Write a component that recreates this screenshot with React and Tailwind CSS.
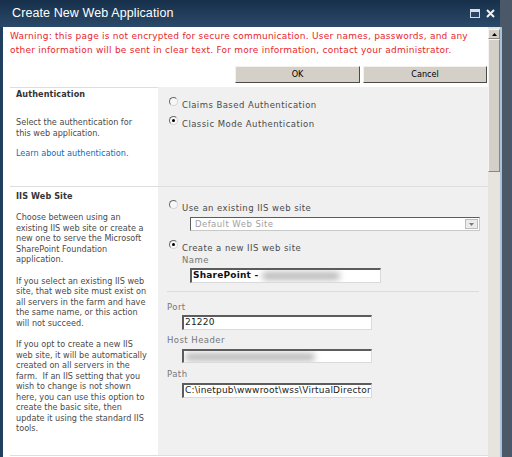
import React from 'react';

const ui = "font-['DejaVu_Sans','Verdana',sans-serif]";
const tah = "font-['DejaVu_Sans_Condensed','Liberation_Sans',sans-serif]";

function Radio({ checked }) {
  return (
    <span className="relative mt-[-2px] inline-block h-[9px] w-[9px] shrink-0 rounded-full border border-t-[#6a6a6a] border-l-[#6a6a6a] border-r-[#d6d6d6] border-b-[#d6d6d6] bg-[#f7f7f7]">
      {checked && <span className="absolute left-[2px] top-[2px] h-[3px] w-[3px] rounded-full bg-black" />}
    </span>
  );
}

function RadioRow({ checked, label, className = '' }) {
  return (
    <div className={`flex items-start pl-[11px] ${className}`}>
      <Radio checked={checked} />
      <span className={`ml-[4px] text-[8.5px] leading-[12px] tracking-[0.45px] text-[#4a4a4a] ${ui}`}>{label}</span>
    </div>
  );
}

function Field({ className = '', children }) {
  return (
    <div
      className={`flex items-center overflow-hidden whitespace-nowrap border-t-2 border-l-2 border-r border-b border-t-[#5c5c5c] border-l-[#5c5c5c] border-r-[#dadada] border-b-[#dadada] bg-white pl-[1px] text-[9px] tracking-[0.2px] text-[#1a1a1a] ${ui} ${className}`}
    >
      {children}
    </div>
  );
}

function Smudge({ w }) {
  return <span className={`inline-block h-[8px] ${w} rounded-full bg-[#b8b8b8] blur-[3px]`} />;
}

function Label({ children, className = '' }) {
  return <div className={`pl-[9px] text-[8.5px] leading-[11px] tracking-[0.45px] text-[#777] ${ui} ${className}`}>{children}</div>;
}

export default function App() {
  return (
    <div className="flex h-[457px] w-[512px] overflow-hidden bg-[#4b5868]">
      <div className="flex w-[502px] flex-col">
        {/* title bar */}
        <div className="flex h-[27px] w-[500px] shrink-0 items-center bg-gradient-to-b from-[#17304b] to-[#2a4a69] pl-[12px] pr-[5px]">
          <span className="text-[12.5px] tracking-[0.1px] text-white font-['Liberation_Sans','Arial',sans-serif]">
            Create New Web Application
          </span>
          <div className="ml-auto flex items-center gap-[6px]">
            <span className="h-[9px] w-[10px] border border-t-[3px] border-[#d8dde3] bg-[#2a4664]" />
            <svg width="9" height="9" viewBox="0 0 9 9">
              <path d="M1 1 L8 8 M8 1 L1 8" stroke="#eef1f4" strokeWidth="2" />
            </svg>
          </div>
        </div>

        {/* body */}
        <div className="flex min-h-0 flex-1 border-r-2 border-[#a9c3da]">
          <div className="w-[3px] shrink-0 bg-[#21405f]" />

          <div className="flex w-[485px] shrink-0 flex-col overflow-hidden bg-white">
            <p className={`pl-[7px] pt-[2px] text-[9px] leading-[14px] tracking-[0.24px] text-[#e8262c] ${ui} whitespace-nowrap`}>
              Warning: this page is not encrypted for secure communication. User names, passwords, and any
              <br />
              other information will be sent in clear text. For more information, contact your administrator.
            </p>

            <div className="mt-[9px] flex justify-end gap-[3px] pr-[1px]">
              <button className={`h-[17px] w-[125px] border border-t-[#f4f2ee] border-l-[#f4f2ee] border-r-[#4a4a4a] border-b-[#4a4a4a] bg-[#d4d0c8] text-[9px] text-black ${tah}`}>
                OK
              </button>
              <button className={`h-[17px] w-[124px] border border-t-[#f4f2ee] border-l-[#f4f2ee] border-r-[#4a4a4a] border-b-[#4a4a4a] bg-[#d4d0c8] text-[9px] text-black ${tah}`}>
                Cancel
              </button>
            </div>

            {/* Authentication */}
            <div className="ml-[7px] mt-[4px] flex h-[99px] shrink-0">
              <div className={`w-[148px] shrink-0 whitespace-nowrap border-t border-[#dedede] px-[6px] text-[9px] text-[#4a4a4a] ${tah}`}>
                <div className="text-[9px] font-bold leading-[12px] tracking-[0.1px] text-[#333]">Authentication</div>
                <div className="mt-[17px] leading-[10.5px]">
                  Select the authentication for
                  <br />
                  this web application.
                </div>
                <div className="mt-[10px] leading-[10.5px] text-[#0a6fbf]">Learn about authentication.</div>
              </div>
              <div className="flex-1 bg-[#f0f0f0] pt-[12px]">
                <RadioRow label="Claims Based Authentication" />
                <RadioRow checked label="Classic Mode Authentication" className="mt-[7px]" />
              </div>
            </div>

            {/* IIS Web Site */}
            <div className="ml-[7px] flex h-[270px] shrink-0 border-y border-[#dedede]">
              <div className={`w-[148px] shrink-0 whitespace-nowrap px-[6px] text-[9px] leading-[10.5px] text-[#4a4a4a] ${tah}`}>
                <div className="pt-[3px] text-[9px] font-bold leading-[12px] tracking-[0.1px] text-[#333]">IIS Web Site</div>
                <p className="mt-[10px]">
                  Choose between using an
                  <br />
                  existing IIS web site or create a
                  <br />
                  new one to serve the Microsoft
                  <br />
                  SharePoint Foundation
                  <br />
                  application.
                </p>
                <p className="mt-[11px]">
                  If you select an existing IIS web
                  <br />
                  site, that web site must exist on
                  <br />
                  all servers in the farm and have
                  <br />
                  the same name, or this action
                  <br />
                  will not succeed.
                </p>
                <p className="mt-[11px]">
                  If you opt to create a new IIS
                  <br />
                  web site, it will be automatically
                  <br />
                  created on all servers in the
                  <br />
                  farm.&nbsp; If an IIS setting that you
                  <br />
                  wish to change is not shown
                  <br />
                  here, you can use this option to
                  <br />
                  create the basic site, then
                  <br />
                  update it using the standard IIS
                  <br />
                  tools.
                </p>
              </div>

              <div className="flex-1 bg-[#f0f0f0] pt-[15px]">
                <RadioRow label="Use an existing IIS web site" />
                <div className="ml-[32px] mt-[3px] flex h-[14px] w-[290px] items-center border border-t-[#5c5c5c] border-l-[#5c5c5c] border-r-[#c8c8c8] border-b-[#c8c8c8] bg-white">
                  <span className={`pl-[4px] text-[8.5px] tracking-[0.45px] text-[#a0a0a0] ${ui}`}>Default Web Site</span>
                  <span className="ml-auto mr-[1px] flex h-[10px] w-[13px] items-center justify-center border border-[#bdbdbd] bg-[#ebebeb]">
                    <svg width="5" height="3" viewBox="0 0 5 3">
                      <path d="M0 0 L5 0 L2.5 3 Z" fill="#7a7a7a" />
                    </svg>
                  </span>
                </div>
                <RadioRow checked label="Create a new IIS web site" className="mt-[11px]" />
                <div className={`ml-[24px] mt-[1px] text-[8.5px] leading-[11px] tracking-[0.45px] text-[#777] ${ui}`}>Name</div>
                <Field className="ml-[32px] mt-[2px] h-[15px] w-[191px]">
                  <span className="font-semibold text-[#111]">SharePoint -&nbsp;</span>
                  <Smudge w="w-[78px]" />
                </Field>
                <div className="mx-[9px] mt-[8px] h-px bg-[#dcdcdc]" />

                <Label className="mt-[10px]">Port</Label>
                <Field className="ml-[24px] mt-[2px] h-[15px] w-[190px]">21220</Field>
                <Label className="mt-[5px]">Host Header</Label>
                <Field className="ml-[24px] mt-[3px] h-[14px] w-[190px]">
                  <Smudge w="w-[130px]" />
                </Field>
                <Label className="mt-[6px]">Path</Label>
                <Field className="ml-[24px] mt-[3px] h-[15px] w-[190px]">C:\inetpub\wwwroot\wss\VirtualDirector</Field>
              </div>
            </div>
          </div>

          {/* scrollbar */}
          <div className="flex w-[12px] shrink-0 flex-col bg-[#e7e4dd]">
            <div className="mt-[2px] flex h-[10px] items-center justify-center border border-t-[#f6f5f2] border-l-[#f6f5f2] border-r-[#8a877f] border-b-[#8a877f] bg-[#d4d0c8]">
              <svg width="5" height="3" viewBox="0 0 5 3">
                <path d="M2.5 0 L5 3 L0 3 Z" fill="#000" />
              </svg>
            </div>
            <div className="h-[133px] border border-t-[#f6f5f2] border-l-[#f6f5f2] border-r-[#8a877f] border-b-[#8a877f] bg-[#d4d0c8]" />
          </div>
        </div>
      </div>
    </div>
  );
}
